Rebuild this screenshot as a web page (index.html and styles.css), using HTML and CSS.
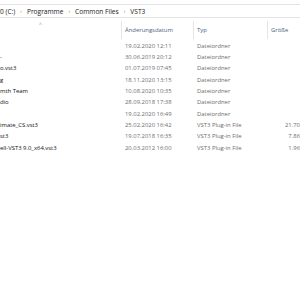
FILE: index.html
```html
<!DOCTYPE html>
<html lang="de">
<head>
  <meta charset="UTF-8"/>
  <title>VST3</title>
  <link rel="stylesheet" href="styles.css">
</head>
<body>
  <div class="address">
    <div class="crumbs">
      <span>0 (C:)</span><span class="sep">›</span>
      <span>Programme</span><span class="sep">›</span>
      <span>Common Files</span><span class="sep">›</span>
      <span>VST3</span>
    </div>
  </div>

  <div class="cols">
    <div class="col col-name"><span class="sort">^</span></div>
    <div class="col col-date">Änderungsdatum</div>
    <div class="col col-type">Typ</div>
    <div class="col col-size">Größe</div>
  </div>

  <div class="list">
    <div class="row"><span class="name"></span><span class="date">19.02.2020 12:11</span><span class="type">Dateiordner</span><span class="size"></span></div>
    <div class="row"><span class="name">-</span><span class="date">30.06.2019 20:12</span><span class="type">Dateiordner</span><span class="size"></span></div>
    <div class="row"><span class="name">o.vst3</span><span class="date">01.07.2019 07:45</span><span class="type">Dateiordner</span><span class="size"></span></div>
    <div class="row"><span class="name">g</span><span class="date">18.11.2020 13:15</span><span class="type">Dateiordner</span><span class="size"></span></div>
    <div class="row"><span class="name">mth Team</span><span class="date">10.08.2020 10:35</span><span class="type">Dateiordner</span><span class="size"></span></div>
    <div class="row"><span class="name">dio</span><span class="date">28.09.2018 17:38</span><span class="type">Dateiordner</span><span class="size"></span></div>
    <div class="row"><span class="name"></span><span class="date">19.02.2020 16:49</span><span class="type">Dateiordner</span><span class="size"></span></div>
    <div class="row"><span class="name">imate_CS.vst3</span><span class="date">25.02.2020 16:42</span><span class="type">VST3 Plug-in File</span><span class="size">21.70</span></div>
    <div class="row"><span class="name">st3</span><span class="date">19.07.2018 16:35</span><span class="type">VST3 Plug-in File</span><span class="size">7.86</span></div>
    <div class="row"><span class="name">ell-VST3 9.0_x64.vst3</span><span class="date">20.03.2012 16:00</span><span class="type">VST3 Plug-in File</span><span class="size">1.96</span></div>
  </div>
</body>
</html>
```

FILE: styles.css
```css
/* Base */
* { margin:0; padding:0; box-sizing:border-box; }
body {
  font-family: "Open Sans", "Noto Sans", sans-serif;
  font-size: 5.9px;
  background: #fff;
  color: #1a1a1a;
  width: 300px;
  height: 300px;
  overflow: hidden;
}

/* Address bar */
.address {
  margin-top: 4px;
  height: 14px;
  border-top: 1px solid #e3e3e3;
  border-bottom: 1px solid #e3e3e3;
  display: flex;
  align-items: center;
}
.crumbs {
  display: flex;
  align-items: center;
  gap: 3px;
  font-size: 6.6px;
  color: #1a1a1a;
}
.sep {
  color: #777;
  font-size: 5.5px;
  padding: 0 2px;
}

/* Column headers */
.cols {
  display: grid;
  grid-template-columns: 122px 72px 74px 32px;
  height: 18px;
  margin-top: 3px;
  color: #4c607a;
}
.col {
  display: flex;
  align-items: center;
  padding-left: 3px;
  border-right: 1px solid #e5e5e5;
}
.col-name {
  justify-content: flex-start;
  padding-left: 39px;
  align-items: flex-start;
}
.col-size { border-right: none; }
.sort {
  color: #8a8a8a;
  font-size: 5px;
  line-height: 6px;
}

/* File list */
.list {
  margin-top: 1px;
  display: flex;
  flex-direction: column;
}
.row {
  display: grid;
  grid-template-columns: 125px 72px 71px 32px;
  height: 11.33px;
  align-items: center;
  white-space: nowrap;
}
.name { color: #111; }
.date, .type, .size { color: #6d6d6d; }
.size { text-align: right; }
```
